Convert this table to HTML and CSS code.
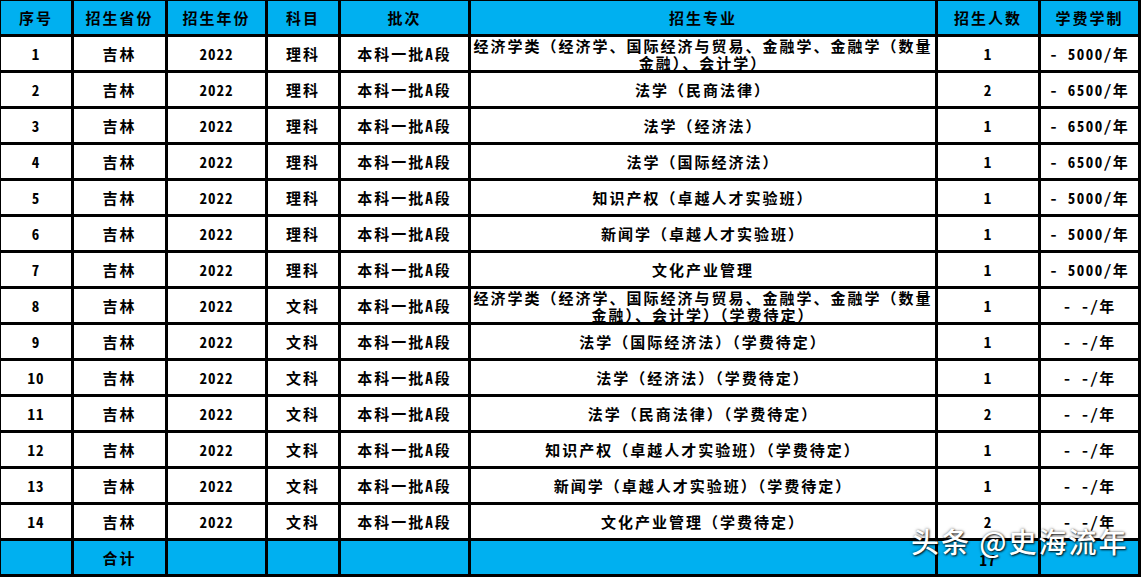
FILE: index.html
```html
<!DOCTYPE html>
<html lang="zh-CN">
<head>
<meta charset="utf-8">
<title>招生计划</title>
<link rel="stylesheet" href="styles.css">
</head>
<body>
<div class="sheet">
  <div class="table">
    <div class="cell head">序号</div><div class="cell head">招生省份</div><div class="cell head">招生年份</div><div class="cell head">科目</div><div class="cell head">批次</div><div class="cell head">招生专业</div><div class="cell head">招生人数</div><div class="cell head">学费学制</div>

    <div class="cell num">1</div><div class="cell">吉林</div><div class="cell num">2022</div><div class="cell">理科</div><div class="cell">本科一批A段</div><div class="cell major">经济学类（经济学、国际经济与贸易、金融学、金融学（数量金融）、会计学）</div><div class="cell num">1</div><div class="cell fee">- 5000/年</div>
    <div class="cell num">2</div><div class="cell">吉林</div><div class="cell num">2022</div><div class="cell">理科</div><div class="cell">本科一批A段</div><div class="cell major">法学（民商法律）</div><div class="cell num">2</div><div class="cell fee">- 6500/年</div>
    <div class="cell num">3</div><div class="cell">吉林</div><div class="cell num">2022</div><div class="cell">理科</div><div class="cell">本科一批A段</div><div class="cell major">法学（经济法）</div><div class="cell num">1</div><div class="cell fee">- 6500/年</div>
    <div class="cell num">4</div><div class="cell">吉林</div><div class="cell num">2022</div><div class="cell">理科</div><div class="cell">本科一批A段</div><div class="cell major">法学（国际经济法）</div><div class="cell num">1</div><div class="cell fee">- 6500/年</div>
    <div class="cell num">5</div><div class="cell">吉林</div><div class="cell num">2022</div><div class="cell">理科</div><div class="cell">本科一批A段</div><div class="cell major">知识产权（卓越人才实验班）</div><div class="cell num">1</div><div class="cell fee">- 5000/年</div>
    <div class="cell num">6</div><div class="cell">吉林</div><div class="cell num">2022</div><div class="cell">理科</div><div class="cell">本科一批A段</div><div class="cell major">新闻学（卓越人才实验班）</div><div class="cell num">1</div><div class="cell fee">- 5000/年</div>
    <div class="cell num">7</div><div class="cell">吉林</div><div class="cell num">2022</div><div class="cell">理科</div><div class="cell">本科一批A段</div><div class="cell major">文化产业管理</div><div class="cell num">1</div><div class="cell fee">- 5000/年</div>
    <div class="cell num">8</div><div class="cell">吉林</div><div class="cell num">2022</div><div class="cell">文科</div><div class="cell">本科一批A段</div><div class="cell major">经济学类（经济学、国际经济与贸易、金融学、金融学（数量金融）、会计学）（学费待定）</div><div class="cell num">1</div><div class="cell fee">- -/年</div>
    <div class="cell num">9</div><div class="cell">吉林</div><div class="cell num">2022</div><div class="cell">文科</div><div class="cell">本科一批A段</div><div class="cell major">法学（国际经济法）（学费待定）</div><div class="cell num">1</div><div class="cell fee">- -/年</div>
    <div class="cell num">10</div><div class="cell">吉林</div><div class="cell num">2022</div><div class="cell">文科</div><div class="cell">本科一批A段</div><div class="cell major">法学（经济法）（学费待定）</div><div class="cell num">1</div><div class="cell fee">- -/年</div>
    <div class="cell num">11</div><div class="cell">吉林</div><div class="cell num">2022</div><div class="cell">文科</div><div class="cell">本科一批A段</div><div class="cell major">法学（民商法律）（学费待定）</div><div class="cell num">2</div><div class="cell fee">- -/年</div>
    <div class="cell num">12</div><div class="cell">吉林</div><div class="cell num">2022</div><div class="cell">文科</div><div class="cell">本科一批A段</div><div class="cell major">知识产权（卓越人才实验班）（学费待定）</div><div class="cell num">1</div><div class="cell fee">- -/年</div>
    <div class="cell num">13</div><div class="cell">吉林</div><div class="cell num">2022</div><div class="cell">文科</div><div class="cell">本科一批A段</div><div class="cell major">新闻学（卓越人才实验班）（学费待定）</div><div class="cell num">1</div><div class="cell fee">- -/年</div>
    <div class="cell num">14</div><div class="cell">吉林</div><div class="cell num">2022</div><div class="cell">文科</div><div class="cell">本科一批A段</div><div class="cell major">文化产业管理（学费待定）</div><div class="cell num">2</div><div class="cell fee">- -/年</div>

    <div class="cell total"></div><div class="cell total">合计</div><div class="cell total"></div><div class="cell total"></div><div class="cell total"></div><div class="cell total"></div><div class="cell total num">17</div><div class="cell total"></div>
  </div>
  <div class="watermark">头条 @史海流年</div>
</div>
</body>
</html>
```
FILE: styles.css
```css
html, body {
  margin: 0;
  padding: 0;
  background: #ffffff;
}

.sheet {
  position: relative;
  width: 1143px;
  height: 577px;
  overflow: hidden;
}

.table {
  display: grid;
  grid-template-columns: 70px 91px 97px 70px 127px 464px 100px 97px;
  grid-template-rows: 33px repeat(14, 33px) 33px;
  gap: 3px;
  padding: 1px 3px 3px 1px;
  background: #000000;
  width: fit-content;
  font-family: "Noto Sans Mono CJK SC", "Noto Sans CJK SC", "Liberation Sans", sans-serif;
  font-weight: 700;
  font-size: 15px;
  letter-spacing: 2px;
  color: #000000;
}

.cell {
  background: #ffffff;
  display: flex;
  align-items: center;
  justify-content: center;
  text-align: center;
  overflow: hidden;
  white-space: nowrap;
  line-height: 17px;
}

.head,
.total {
  background: #00b0f0;
}

.num {
  letter-spacing: 1px;
}

.total.num {
  padding-top: 4px;
}

.fee {
  white-space: pre;
  letter-spacing: 1.5px;
}

.major {
  white-space: normal;
  padding: 0 2px;
  line-height: 17px;
}

.watermark {
  position: absolute;
  left: 911px;
  top: 521px;
  font-family: "Noto Sans CJK SC", "Liberation Sans", sans-serif;
  font-size: 28px;
  font-weight: 500;
  letter-spacing: 2px;
  color: #ffffff;
  text-shadow: 1px 1px 2px rgba(0, 0, 0, 0.85), 0 0 3px rgba(0, 0, 0, 0.5);
  white-space: nowrap;
}
```
